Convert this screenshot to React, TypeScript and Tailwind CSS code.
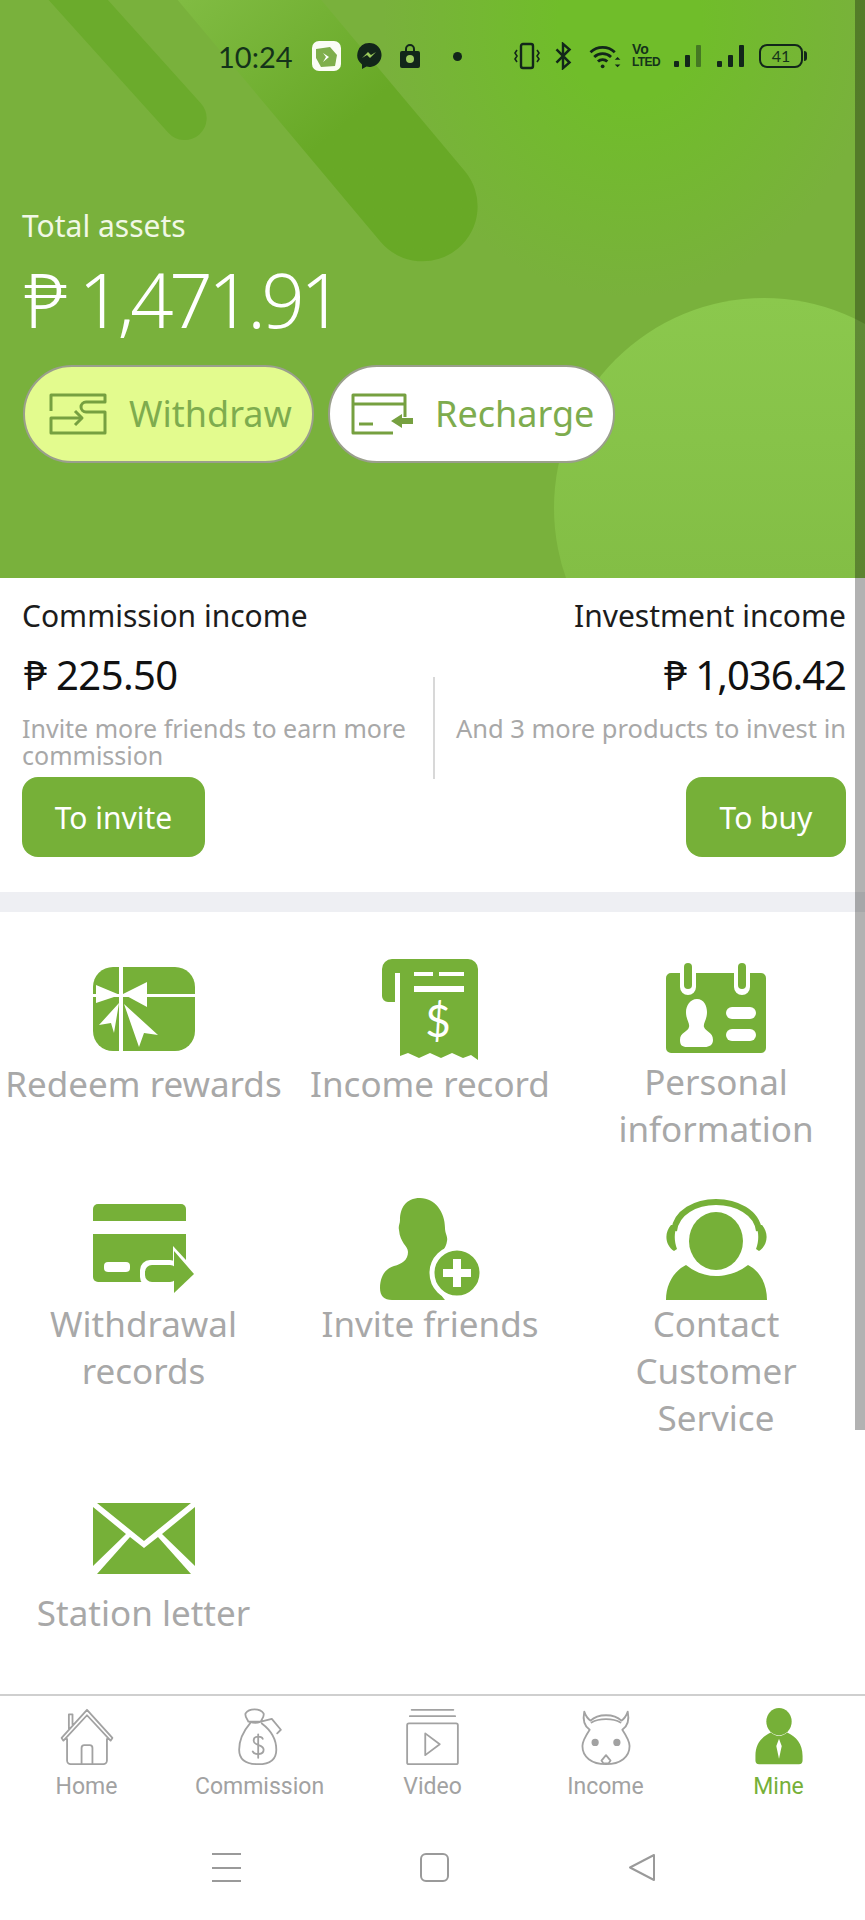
import type { ReactNode } from 'react'

const GREEN = '#76b038'

function Signal({ className, dim }: { className: string; dim?: boolean }) {
  return (
    <svg className={className} width="31" height="24" viewBox="0 0 31 24" fill="#12261a">
      <rect x="1" y="17" width="5" height="6" rx="1" />
      <rect x="12" y="11" width="5" height="12" rx="1" />
      <rect x="23" y="1" width="5" height="22" rx="1" opacity={dim ? 0.45 : 1} />
    </svg>
  )
}

function StatusBar() {
  return (
    <div className="flex h-[32px] items-center pl-[218px] text-[#14331a]" style={{ fontFamily: 'Lato, sans-serif' }}>
      <span className="w-[73px] text-[29px] leading-none">10:24</span>
      <svg className="ml-[21px]" width="29" height="30" viewBox="0 0 29 30">
        <rect width="29" height="30" rx="7" fill="#fbfdf5" />
        <path d="M4 8l14-2 7 8-2 11-14 1-5-9z" fill="#7fae4c" />
        <path d="M11 12l6 4-6 5 3-5z" fill="#fff" />
      </svg>
      <svg className="ml-[15px]" width="26" height="28" viewBox="0 0 26 28">
        <path d="M13 1a12 12 0 0 0-7 21.5V27l4.5-2.4A12 12 0 1 0 13 1z" fill="#12261a" />
        <path d="M6 16l6-6 3 3 5-3-6 6-3-3z" fill="#9ccb5c" />
      </svg>
      <svg className="ml-[18px]" width="20" height="26" viewBox="0 0 20 26">
        <path d="M6 9V6a4 4 0 0 1 8 0v3" fill="none" stroke="#12261a" strokeWidth="2" />
        <rect x="0" y="8" width="20" height="17" rx="2" fill="#12261a" />
        <circle cx="10" cy="16" r="4" fill="#9ccb5c" />
      </svg>
      <span className="ml-[33px] h-[9px] w-[9px] rounded-full bg-[#12261a]" />
      <svg className="ml-[52px]" width="26" height="28" viewBox="0 0 26 28" fill="none" stroke="#12261a">
        <rect x="7" y="2" width="12" height="24" rx="2" strokeWidth="2.4" />
        <path d="M3 8l-2 3 2 3-2 3 2 3M23 8l2 3-2 3 2 3-2 3" strokeWidth="1.6" />
      </svg>
      <svg className="ml-[14px]" width="18" height="28" viewBox="0 0 18 30" fill="none" stroke="#12261a" strokeWidth="2.6">
        <path d="M2 8l14 14-7 6V2l7 6L2 22" />
      </svg>
      <svg className="ml-[16px]" width="33" height="28" viewBox="0 0 34 30" fill="none" stroke="#12261a" strokeWidth="3">
        <path d="M2 11a19 19 0 0 1 26 0M6 16a13 13 0 0 1 18 0M10 21a7 7 0 0 1 10 0" />
        <circle cx="15" cy="26" r="2" fill="#12261a" stroke="none" />
        <path d="M28 19l3-3 3 3zM28 24l3 3 3-3z" fill="#12261a" stroke="none" />
      </svg>
      <div className="ml-[11px] flex w-[28px] flex-col text-[14px] font-bold leading-[13px]" style={{ fontFamily: '"Liberation Sans", sans-serif' }}>
        <span>Vo</span>
        <span className="text-[12px] tracking-tighter">LTED</span>
      </div>
      <Signal className="ml-[13px]" dim />
      <Signal className="ml-[12px]" />
      <div className="relative ml-[12px] flex h-[24px] w-[44px] items-center justify-center rounded-lg border-2 border-[#12261a] text-[16px] leading-none">
        41
        <span className="absolute right-[-6px] h-[10px] w-[3px] rounded-r bg-[#12261a]" />
      </div>
    </div>
  )
}

function HeroShapes() {
  return (
    <div className="pointer-events-none absolute inset-0 overflow-hidden">
      <div className="absolute left-[380px] top-[-260px] h-[560px] w-[500px] bg-[radial-gradient(ellipse_at_center,#70bd2a_0%,#70bd2a_20%,transparent_70%)]" />
      <div className="absolute left-[77px] top-[-127px] h-[300px] w-[44px] rotate-[-42deg] rounded-full bg-[#6bab2c]" />
      <div className="absolute left-[223px] top-[-246px] h-[560px] w-[110px] rotate-[-40deg] rounded-full bg-gradient-to-b from-[#8fcb50] via-[#80bb42] via-35% to-[#68a926] to-70%" />
      <div className="absolute left-[554px] top-[298px] h-[420px] w-[420px] rounded-full bg-gradient-to-b from-[#8bc84d] to-[#7fb941]" />
    </div>
  )
}

function PillButton({ label, icon, className }: { label: string; icon: ReactNode; className: string }) {
  return (
    <div className={`flex h-[98px] items-center rounded-full border-2 border-[#9a9f8c] ${className}`}>
      {icon}
      <span className="ml-[22px] text-[36px] text-[#7eac4e]">{label}</span>
    </div>
  )
}

function WithdrawIcon() {
  return (
    <svg width="58" height="42" viewBox="0 0 58 42" fill="none" stroke="#76a040" strokeWidth="3" strokeLinejoin="round">
      <path d="M2 18V2h54v7H37a5 5 0 0 0 0 10h19v21H2V25h30" />
      <path d="M26 18l7 7-7 7" />
    </svg>
  )
}

function RechargeIcon() {
  return (
    <svg width="62" height="42" viewBox="0 0 62 42" fill="none" stroke="#76a040" strokeWidth="3" strokeLinejoin="round">
      <path d="M42 40H2V2h52v22M2 11h52" />
      <path d="M8 31h14" />
      <path d="M62 25H51v-4l-11 7 11 7v-4h11z" fill="#76a040" stroke="none" />
    </svg>
  )
}

function Hero() {
  return (
    <div className="relative h-[578px] bg-[#79b13c] pt-[40px]">
      <HeroShapes />
      <div className="relative">
        <StatusBar />
        <div className="ml-[22px] mt-[136px] text-[30px] leading-[36px] text-[#f1f8e6]">Total assets</div>
        <div className="ml-[24px] mt-[15px] text-[76px] font-light leading-[80px] tracking-[-4.4px] text-white">₱ 1,471.91</div>
        <div className="ml-[23px] mt-[26px] flex gap-[14px]">
          <PillButton label="Withdraw" icon={<WithdrawIcon />} className="w-[291px] bg-[#e3fb8e] pl-[24px]" />
          <PillButton label="Recharge" icon={<RechargeIcon />} className="w-[287px] bg-white pl-[21px]" />
        </div>
      </div>
    </div>
  )
}

function IncomePanel() {
  return (
    <div className="flex h-[314px] bg-white pt-[16px]">
      <div className="w-[433px] pl-[22px]">
        <div className="text-[30px] leading-[44px] text-[#1c1c1c]">Commission income</div>
        <div className="ml-[2px] mt-[13px] text-[40px] leading-[48px] tracking-[-0.6px] text-[#111]">₱ 225.50</div>
        <div className="mt-[16px] w-[400px] text-[25px] leading-[27px] text-[#a8a8a8]">Invite more friends to earn more commission</div>
        <div className="mt-[8px] flex h-[80px] w-[183px] items-center justify-center rounded-2xl bg-[#76b038] text-[30px] text-white">To invite</div>
      </div>
      <div className="mt-[83px] h-[102px] w-[2px] bg-[#d8d8d8]" />
      <div className="flex flex-1 flex-col items-end pr-[19px]">
        <div className="text-[30px] leading-[44px] text-[#1c1c1c]">Investment income</div>
        <div className="mt-[13px] text-[40px] leading-[48px] tracking-[-1px] text-[#111]">₱ 1,036.42</div>
        <div className="mt-[16px] whitespace-nowrap text-[25.5px] leading-[27px] text-[#a8a8a8]">And 3 more products to invest in</div>
        <div className="mt-[35px] flex h-[80px] w-[160px] items-center justify-center rounded-2xl bg-[#76b038] text-[30px] text-white">To buy</div>
      </div>
    </div>
  )
}

function GiftIcon() {
  return (
    <svg width="102" height="84" viewBox="0 0 102 84">
      <rect width="102" height="84" rx="20" fill={GREEN} />
      <path d="M0 27h102v3H0zM26 0h4v84h-4z" fill="#fff" />
      <path d="M3 18l24 10-24 8zM54 15L30 27l24 13z" fill="#fff" />
      <path d="M26 36L6 58l12-2 3 10zM31 37l34 31-14-2-5 14z" fill="#fff" />
    </svg>
  )
}

function ReceiptIcon() {
  return (
    <svg width="96" height="101" viewBox="0 0 96 101" fill={GREEN}>
      <path d="M10 0h76a10 10 0 0 1 10 10v91l-7-5-8 3-11-5-11 5-11-5-11 5-11-5-8 3V14h-5v29H6a6 6 0 0 1-6-6V10A10 10 0 0 1 10 0z" />
      <path d="M32 13h19v4H32zM57 13h25v4H57zM32 27h50v6H32z" fill="#fff" />
      <text x="56" y="78" textAnchor="middle" fontSize="44" fontFamily="Lato, sans-serif" fill="#fff">$</text>
    </svg>
  )
}

function PersonalIcon() {
  return (
    <svg width="100" height="90" viewBox="0 0 100 90" fill={GREEN}>
      <path d="M5 10h9v14a8 8 0 0 0 16 0V10h38v14a8 8 0 0 0 16 0V10h11a5 5 0 0 1 5 5v70a5 5 0 0 1-5 5H5a5 5 0 0 1-5-5V15a5 5 0 0 1 5-5z" />
      <rect x="18" y="0" width="8" height="26" rx="4" />
      <rect x="72" y="0" width="8" height="26" rx="4" />
      <path d="M31 36c7 0 10 7 10 13 0 8-4 11-3 15 2 5 9 5 9 13 0 5-4 7-8 7H21c-5 0-7-2-7-7 0-8 8-8 9-13 1-4-3-7-3-15 0-6 4-13 11-13z" fill="#fff" />
      <rect x="60" y="44" width="30" height="12" rx="6" fill="#fff" />
      <rect x="60" y="66" width="30" height="12" rx="6" fill="#fff" />
    </svg>
  )
}

function WithdrawalIcon() {
  return (
    <svg width="102" height="90" viewBox="0 0 102 90" fill={GREEN}>
      <path d="M5 0h83a5 5 0 0 1 5 5v12H0V5a5 5 0 0 1 5-5z" />
      <path d="M0 30h93v48H5a5 5 0 0 1-5-5z" />
      <rect x="11" y="58" width="26" height="10" rx="4" fill="#fff" />
      {/* white halo first, then the solid arrow */}
      <rect x="47" y="56" width="40" height="27" rx="10" fill="#fff" />
      <polygon points="80,42 106,70 80,94" fill="#fff" />
      <rect x="52" y="61" width="32" height="17" rx="7" />
      <polygon points="81,47 101,70 81,89" />
    </svg>
  )
}

function InviteIcon() {
  return (
    <svg width="100" height="102" viewBox="0 0 100 102" fill={GREEN}>
      <path d="M40 0c15 0 25 14 25 30 0 6 3 8 2 13-1 8-6 10-6 18 0 3 2 5 4 6-8 8-10 24 0 35H12C4 102 0 98 0 90c0-12 6-20 14-22 8-2 14-6 14-14 0-6-8-9-9-22-1-4 1-6 1-10C20 10 26 0 40 0z" />
      <circle cx="77" cy="75" r="25" stroke="#fff" strokeWidth="5" />
      <path d="M73 61h8v10h10v8H81v10h-8V79H63v-8h10z" fill="#fff" />
    </svg>
  )
}

function AgentIcon() {
  return (
    <svg width="101" height="101" viewBox="0 0 101 101" fill={GREEN}>
      <path d="M0 101C0 85 8 72 20 66c10 8 20 11 30 11s22-3 32-11c12 6 19 19 19 35z" />
      <ellipse cx="50" cy="42" rx="27" ry="29" />
      <path d="M8 32C10 13 30 3 50 3s41 10 43 29" fill="none" stroke={GREEN} strokeWidth="6" />
      <path d="M5 26C-2 34-1 46 8 52l3-2c-3-8-3-16 0-24zM96 26c7 8 6 20-3 26l-3-2c3-8 3-16 0-24z" />
    </svg>
  )
}

function LetterIcon() {
  return (
    <svg width="102" height="71" viewBox="0 0 102 71" fill={GREEN}>
      <path d="M4 0h94L51 38zM0 4l33 27L0 63zM102 4L69 31l33 32zM37 34l14 11 14-11 33 37H4z" />
    </svg>
  )
}

function MenuItem({ icon, label, textClass }: { icon: ReactNode; label: string; textClass?: string }) {
  return (
    <div className="flex flex-col items-center pt-[46px]">
      <div className="flex h-[102px] items-center justify-center">{icon}</div>
      <div className={`text-center text-[35px] leading-[47px] text-[#a8a8a8] ${textClass ?? ''}`}>{label}</div>
    </div>
  )
}

function MenuGrid() {
  return (
    <div className="h-[802px] bg-white">
      <div className="h-[20px] bg-[#eeeff3]" />
      <div className="grid grid-cols-[287px_286px_286px] grid-rows-[240px_289px_auto]">
        <MenuItem icon={<GiftIcon />} label="Redeem rewards" textClass="whitespace-nowrap" />
        <MenuItem icon={<ReceiptIcon />} label="Income record" textClass="whitespace-nowrap" />
        <MenuItem icon={<PersonalIcon />} label="Personal information" textClass="w-[230px]" />
        <MenuItem icon={<WithdrawalIcon />} label="Withdrawal records" textClass="w-[230px]" />
        <MenuItem icon={<InviteIcon />} label="Invite friends" />
        <MenuItem icon={<AgentIcon />} label="Contact Customer Service" textClass="w-[210px]" />
        <MenuItem icon={<LetterIcon />} label="Station letter" />
      </div>
    </div>
  )
}

const TAB_STROKE = { fill: 'none', stroke: '#a2a2a2', strokeWidth: 2, strokeLinejoin: 'round' as const, strokeLinecap: 'round' as const }

function HomeTab() {
  return (
    <svg width="58" height="58" viewBox="0 0 60 64" {...TAB_STROKE}>
      <path d="M2 33L30 2l28 31-2 3L30 8 4 36zM10 23V7h4v11M8 34v24a4 4 0 0 0 4 4h36a4 4 0 0 0 4-4V34M24 62V44a3 3 0 0 1 3-3h6a3 3 0 0 1 3 3v18" />
    </svg>
  )
}

function BagTab() {
  return (
    <svg width="48" height="58" viewBox="0 0 52 64" {...TAB_STROKE}>
      <path d="M10 6c4-6 16-6 20 0 1 4-3 7-3 9H13c0-2-4-5-3-9zM14 15c6 2 8 2 13 0l12-3 10 12-4 4M28 17c8 6 16 16 16 29 0 12-8 16-20 16S3 58 3 46c0-13 6-22 12-29" />
      <path d="M29 34c-1-3-10-4-10 2s11 4 11 10-10 6-12 2M24 29v26" />
    </svg>
  )
}

function VideoTab() {
  return (
    <svg width="57" height="58" viewBox="0 0 60 64" {...TAB_STROKE}>
      <path d="M7 2h46M5 9h50" />
      <rect x="2" y="17" width="56" height="45" rx="2" />
      <path d="M22 28l16 12-16 12z" />
    </svg>
  )
}

function IncomeTab() {
  return (
    <svg width="58" height="58" viewBox="0 0 60 64" {...TAB_STROKE}>
      <path d="M12 24c-6-4-8-10-6-20 2 6 4 8 7 10 8-8 26-8 34 0 3-2 5-4 7-10 2 10 0 16-6 20 4 6 8 12 8 18 0 12-10 20-26 20S4 54 4 42c0-6 4-12 8-18z" />
      <path d="M14 16c8-5 24-5 32 0" />
      <circle cx="18" cy="38" r="3" fill="#a2a2a2" />
      <circle cx="42" cy="38" r="3" fill="#a2a2a2" />
      <path d="M30 52l-5 6 2 3h6l2-3z" />
    </svg>
  )
}

function MineTab() {
  return (
    <svg width="48" height="58" viewBox="0 0 52 64" fill={GREEN}>
      <ellipse cx="26" cy="15" rx="14" ry="15" />
      <path d="M17 27c6 5 12 5 18 0 10 5 17 12 17 26v5a4 4 0 0 1-4 4H4a4 4 0 0 1-4-4v-5c0-14 7-21 17-26z" />
      <path d="M26 34l3 8-3 14-3-14z" fill="#fff" />
    </svg>
  )
}

function TabBar() {
  const tabs = [
    { label: 'Home', icon: <HomeTab /> },
    { label: 'Commission', icon: <BagTab /> },
    { label: 'Video', icon: <VideoTab /> },
    { label: 'Income', icon: <IncomeTab /> },
    { label: 'Mine', icon: <MineTab />, active: true },
  ]
  return (
    <div className="grid h-[104px] grid-cols-5 border-t-2 border-[#cfcfcf] bg-white pt-[12px]">
      {tabs.map((t) => (
        <div key={t.label} className="flex flex-col items-center">
          <div className="flex h-[58px] items-center">{t.icon}</div>
          <span className={`mt-[7px] text-[23px] leading-[28px] ${t.active ? 'text-[#76b038]' : 'text-[#a2a2a2]'}`} style={{ fontFamily: 'Roboto, sans-serif' }}>
            {t.label}
          </span>
        </div>
      ))}
    </div>
  )
}

function NavBar() {
  return (
    <div className="flex h-[122px] items-start justify-between bg-white pl-[212px] pr-[209px] pt-[55px]">
      <div className="flex h-[29px] w-[29px] flex-col justify-between">
        <span className="h-[2px] bg-[#9a9a9a]" />
        <span className="h-[2px] bg-[#9a9a9a]" />
        <span className="h-[2px] bg-[#9a9a9a]" />
      </div>
      <div className="h-[29px] w-[29px] rounded-md border-2 border-[#9a9a9a]" />
      <svg width="29" height="29" viewBox="0 0 29 29" fill="none" stroke="#9a9a9a" strokeWidth="2" strokeLinejoin="round">
        <path d="M27 2v25L3 14.5z" />
      </svg>
    </div>
  )
}

export default function App() {
  return (
    <div className="relative h-[1920px] w-[865px] overflow-hidden bg-white" style={{ fontFamily: '"Noto Sans", sans-serif' }}>
      <Hero />
      <IncomePanel />
      <MenuGrid />
      <TabBar />
      <NavBar />
      {/* scroll thumb on the right edge */}
      <div className="absolute right-0 top-0 h-[1430px] w-[10px] bg-black/30" />
    </div>
  )
}
